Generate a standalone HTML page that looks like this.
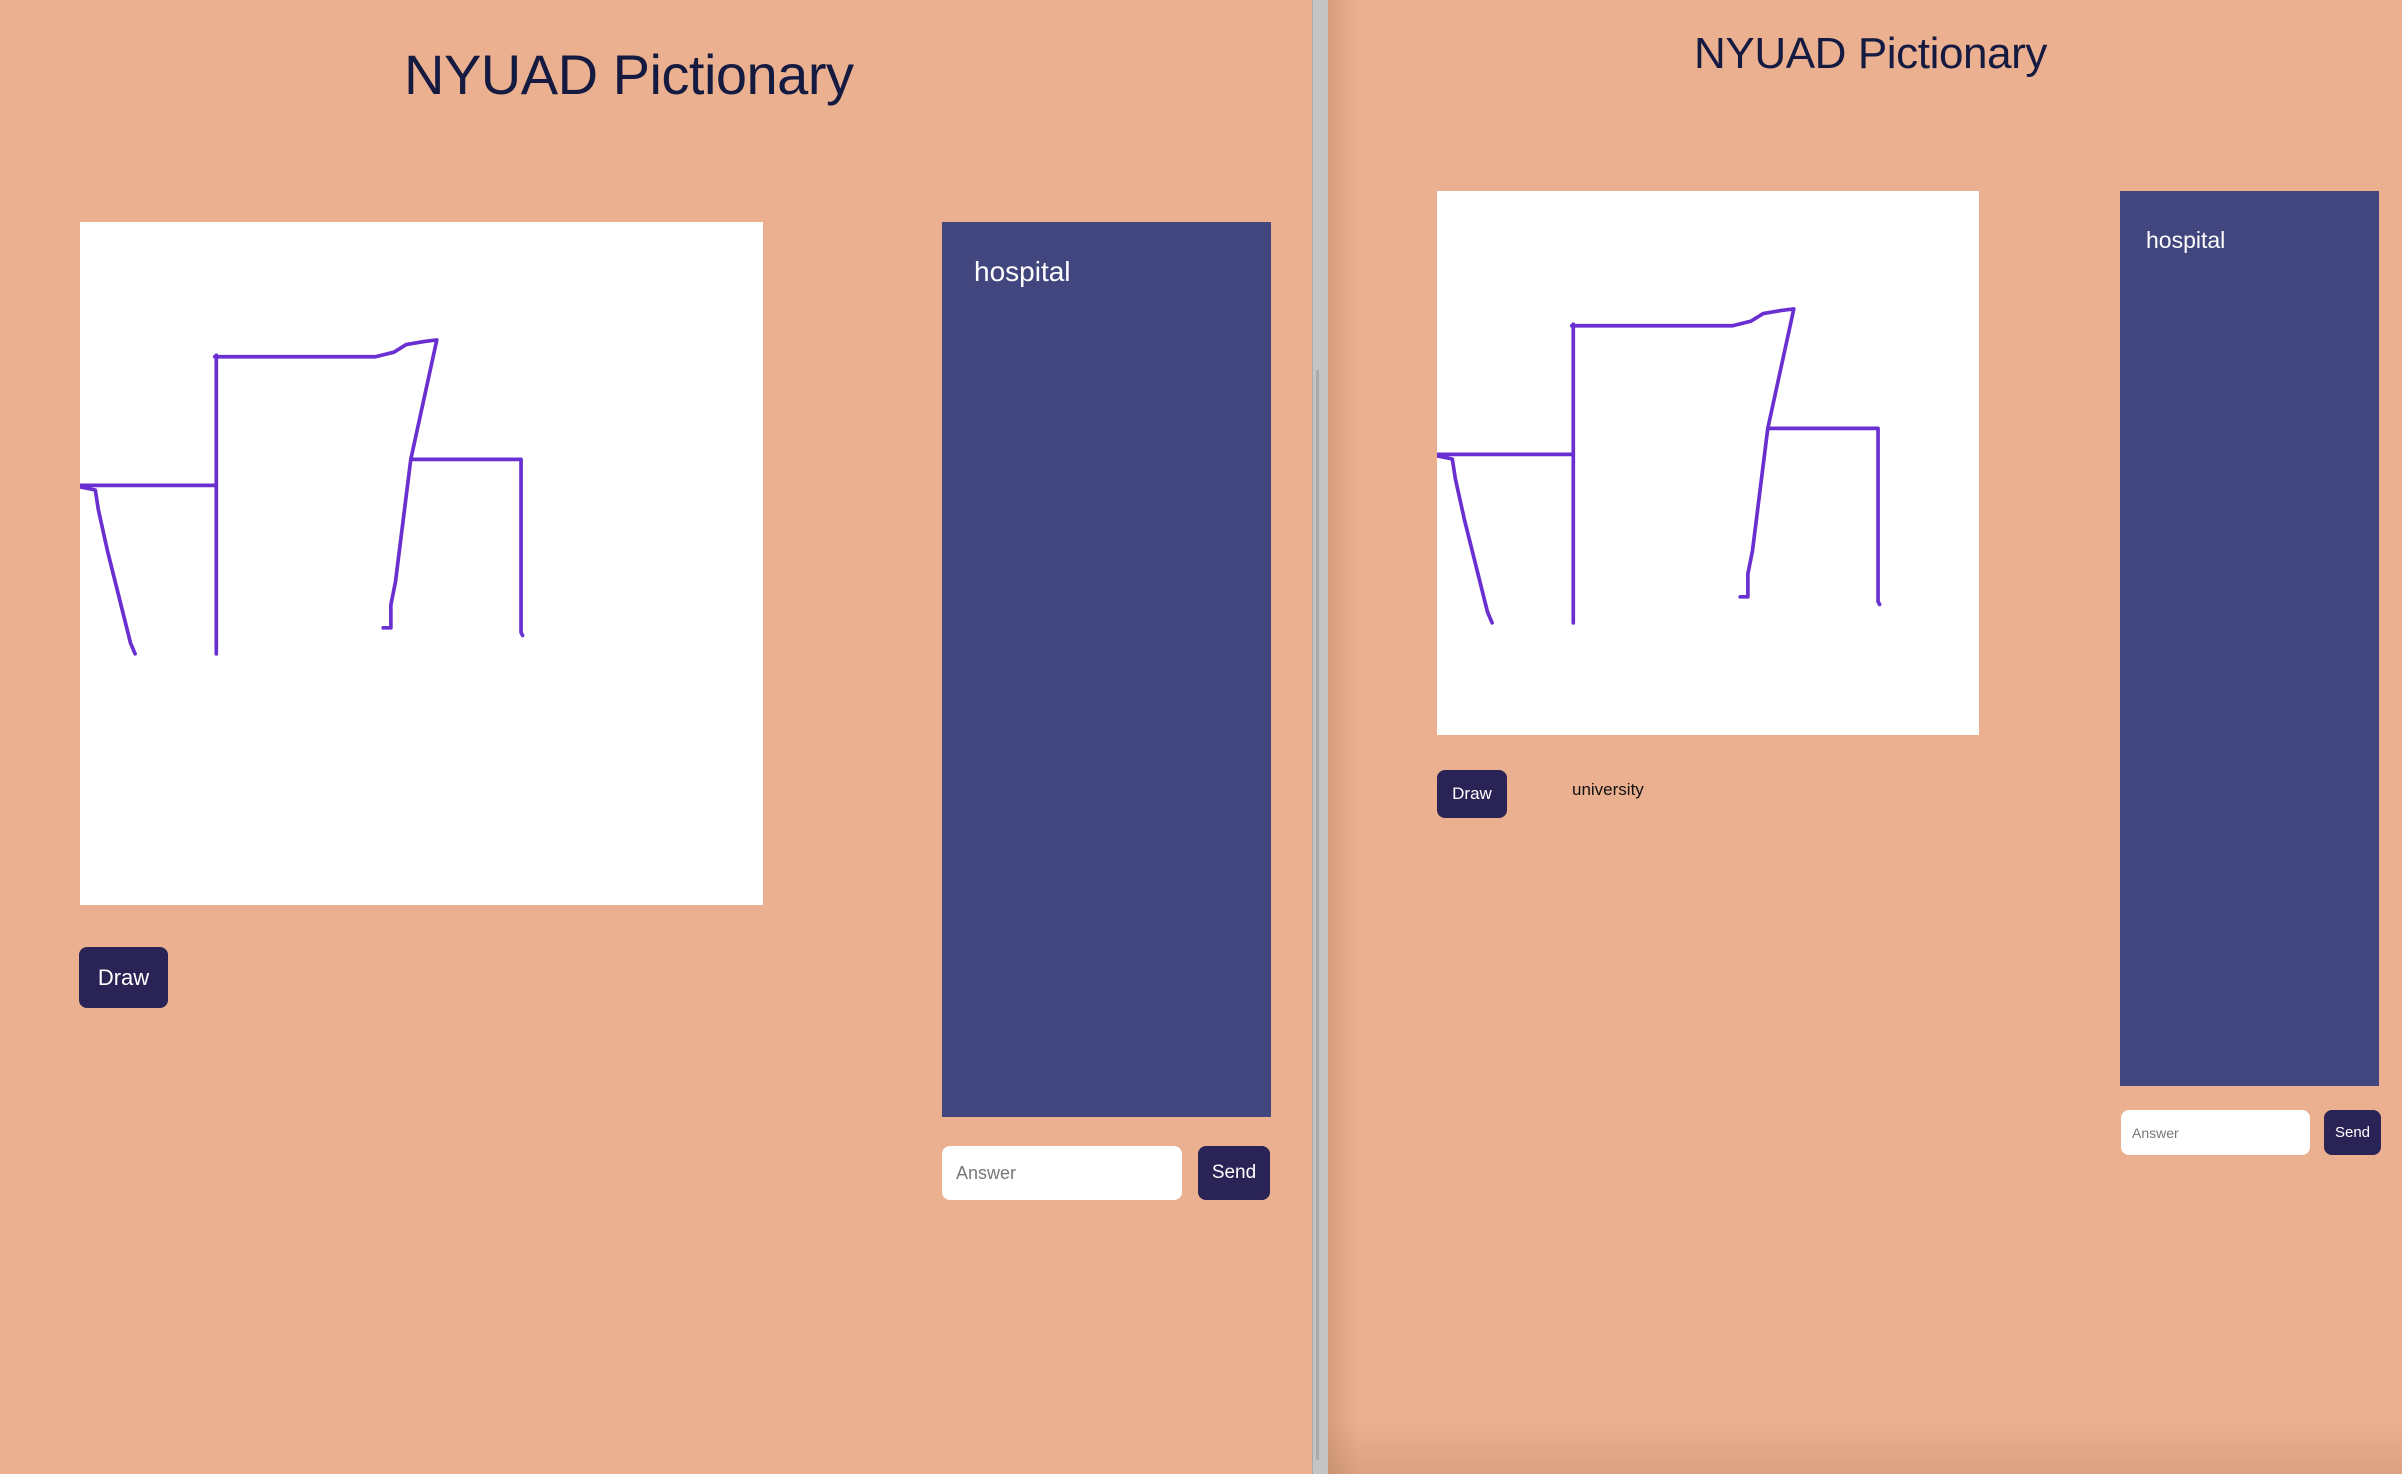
<!DOCTYPE html>
<html><head><meta charset="utf-8"><style>
*{margin:0;padding:0;box-sizing:border-box}
body{width:2402px;height:1474px;background:#ebb090;position:relative;overflow:hidden;font-family:"Liberation Sans",sans-serif}
.a{position:absolute}
.title{color:#141a40;white-space:nowrap}
.canvas{background:#fff;overflow:hidden}
.panel{background:#41467e;color:#fff}
.btn{background:#2a2355;color:#fff;border-radius:8px;display:flex;align-items:center;justify-content:center}
.inp{background:#fff;border-radius:8px;color:#777;display:flex;align-items:center}
</style></head><body>
<div class="a title" style="left:404px;top:42px;font-size:56px;letter-spacing:-0.5px">NYUAD Pictionary</div>
<div class="a canvas" style="left:80px;top:222px;width:683px;height:683px">
<svg width="683" height="683" viewBox="0 0 446 446"><g fill="none" stroke="#6a2fd0" stroke-width="2.4" stroke-linejoin="round" stroke-linecap="round">
<path d="M0 172H89M0 173L10 175L12 188L18 215L28 255L33 275L36 282M89 87V282M88 88H193L205 85L213 80L225 78L233 77L216 155L206 235L203 250L203 265L198 265M216 155H288L288 268L289 270"/></g></svg></div>
<div class="a panel" style="left:942px;top:222px;width:329px;height:895px"><div class="a" style="left:32px;top:34px;font-size:28px">hospital</div></div>
<div class="a btn" style="left:79px;top:947px;width:89px;height:61px;font-size:22px">Draw</div>
<div class="a inp" style="left:942px;top:1146px;width:240px;height:54px;font-size:18px;padding-left:14px">Answer</div>
<div class="a btn" style="left:1198px;top:1146px;width:72px;height:54px;font-size:19px">Send</div>
<div class="a" style="left:1312px;top:0;width:16px;height:1474px;background:#c4c4c4;border-left:1px solid #aaa"></div>
<div class="a" style="left:1316px;top:370px;width:3px;height:1090px;background:#aaa"></div>
<div class="a" style="left:1328px;top:0;width:30px;height:1474px;background:linear-gradient(90deg,rgba(150,100,70,.25),rgba(150,100,70,0))"></div>
<div class="a" style="left:1328px;top:1420px;width:1074px;height:54px;background:linear-gradient(180deg,rgba(150,100,70,0),rgba(150,100,70,.2))"></div>
<div class="a title" style="left:1694px;top:29px;font-size:44px;letter-spacing:-0.4px">NYUAD Pictionary</div>
<div class="a canvas" style="left:1437px;top:191px;width:542px;height:544px">
<svg width="683" height="683" viewBox="0 0 446 446"><g fill="none" stroke="#6a2fd0" stroke-width="2.4" stroke-linejoin="round" stroke-linecap="round">
<path d="M0 172H89M0 173L10 175L12 188L18 215L28 255L33 275L36 282M89 87V282M88 88H193L205 85L213 80L225 78L233 77L216 155L206 235L203 250L203 265L198 265M216 155H288L288 268L289 270"/></g></svg></div>
<div class="a panel" style="left:2120px;top:191px;width:259px;height:895px"><div class="a" style="left:26px;top:36px;font-size:23px">hospital</div></div>
<div class="a btn" style="left:1437px;top:770px;width:70px;height:48px;font-size:17px">Draw</div>
<div class="a" style="left:1572px;top:780px;font-size:17px;color:#111">university</div>
<div class="a inp" style="left:2121px;top:1110px;width:189px;height:45px;font-size:14px;padding-left:11px">Answer</div>
<div class="a btn" style="left:2324px;top:1110px;width:57px;height:45px;font-size:15px">Send</div>
</body></html>
